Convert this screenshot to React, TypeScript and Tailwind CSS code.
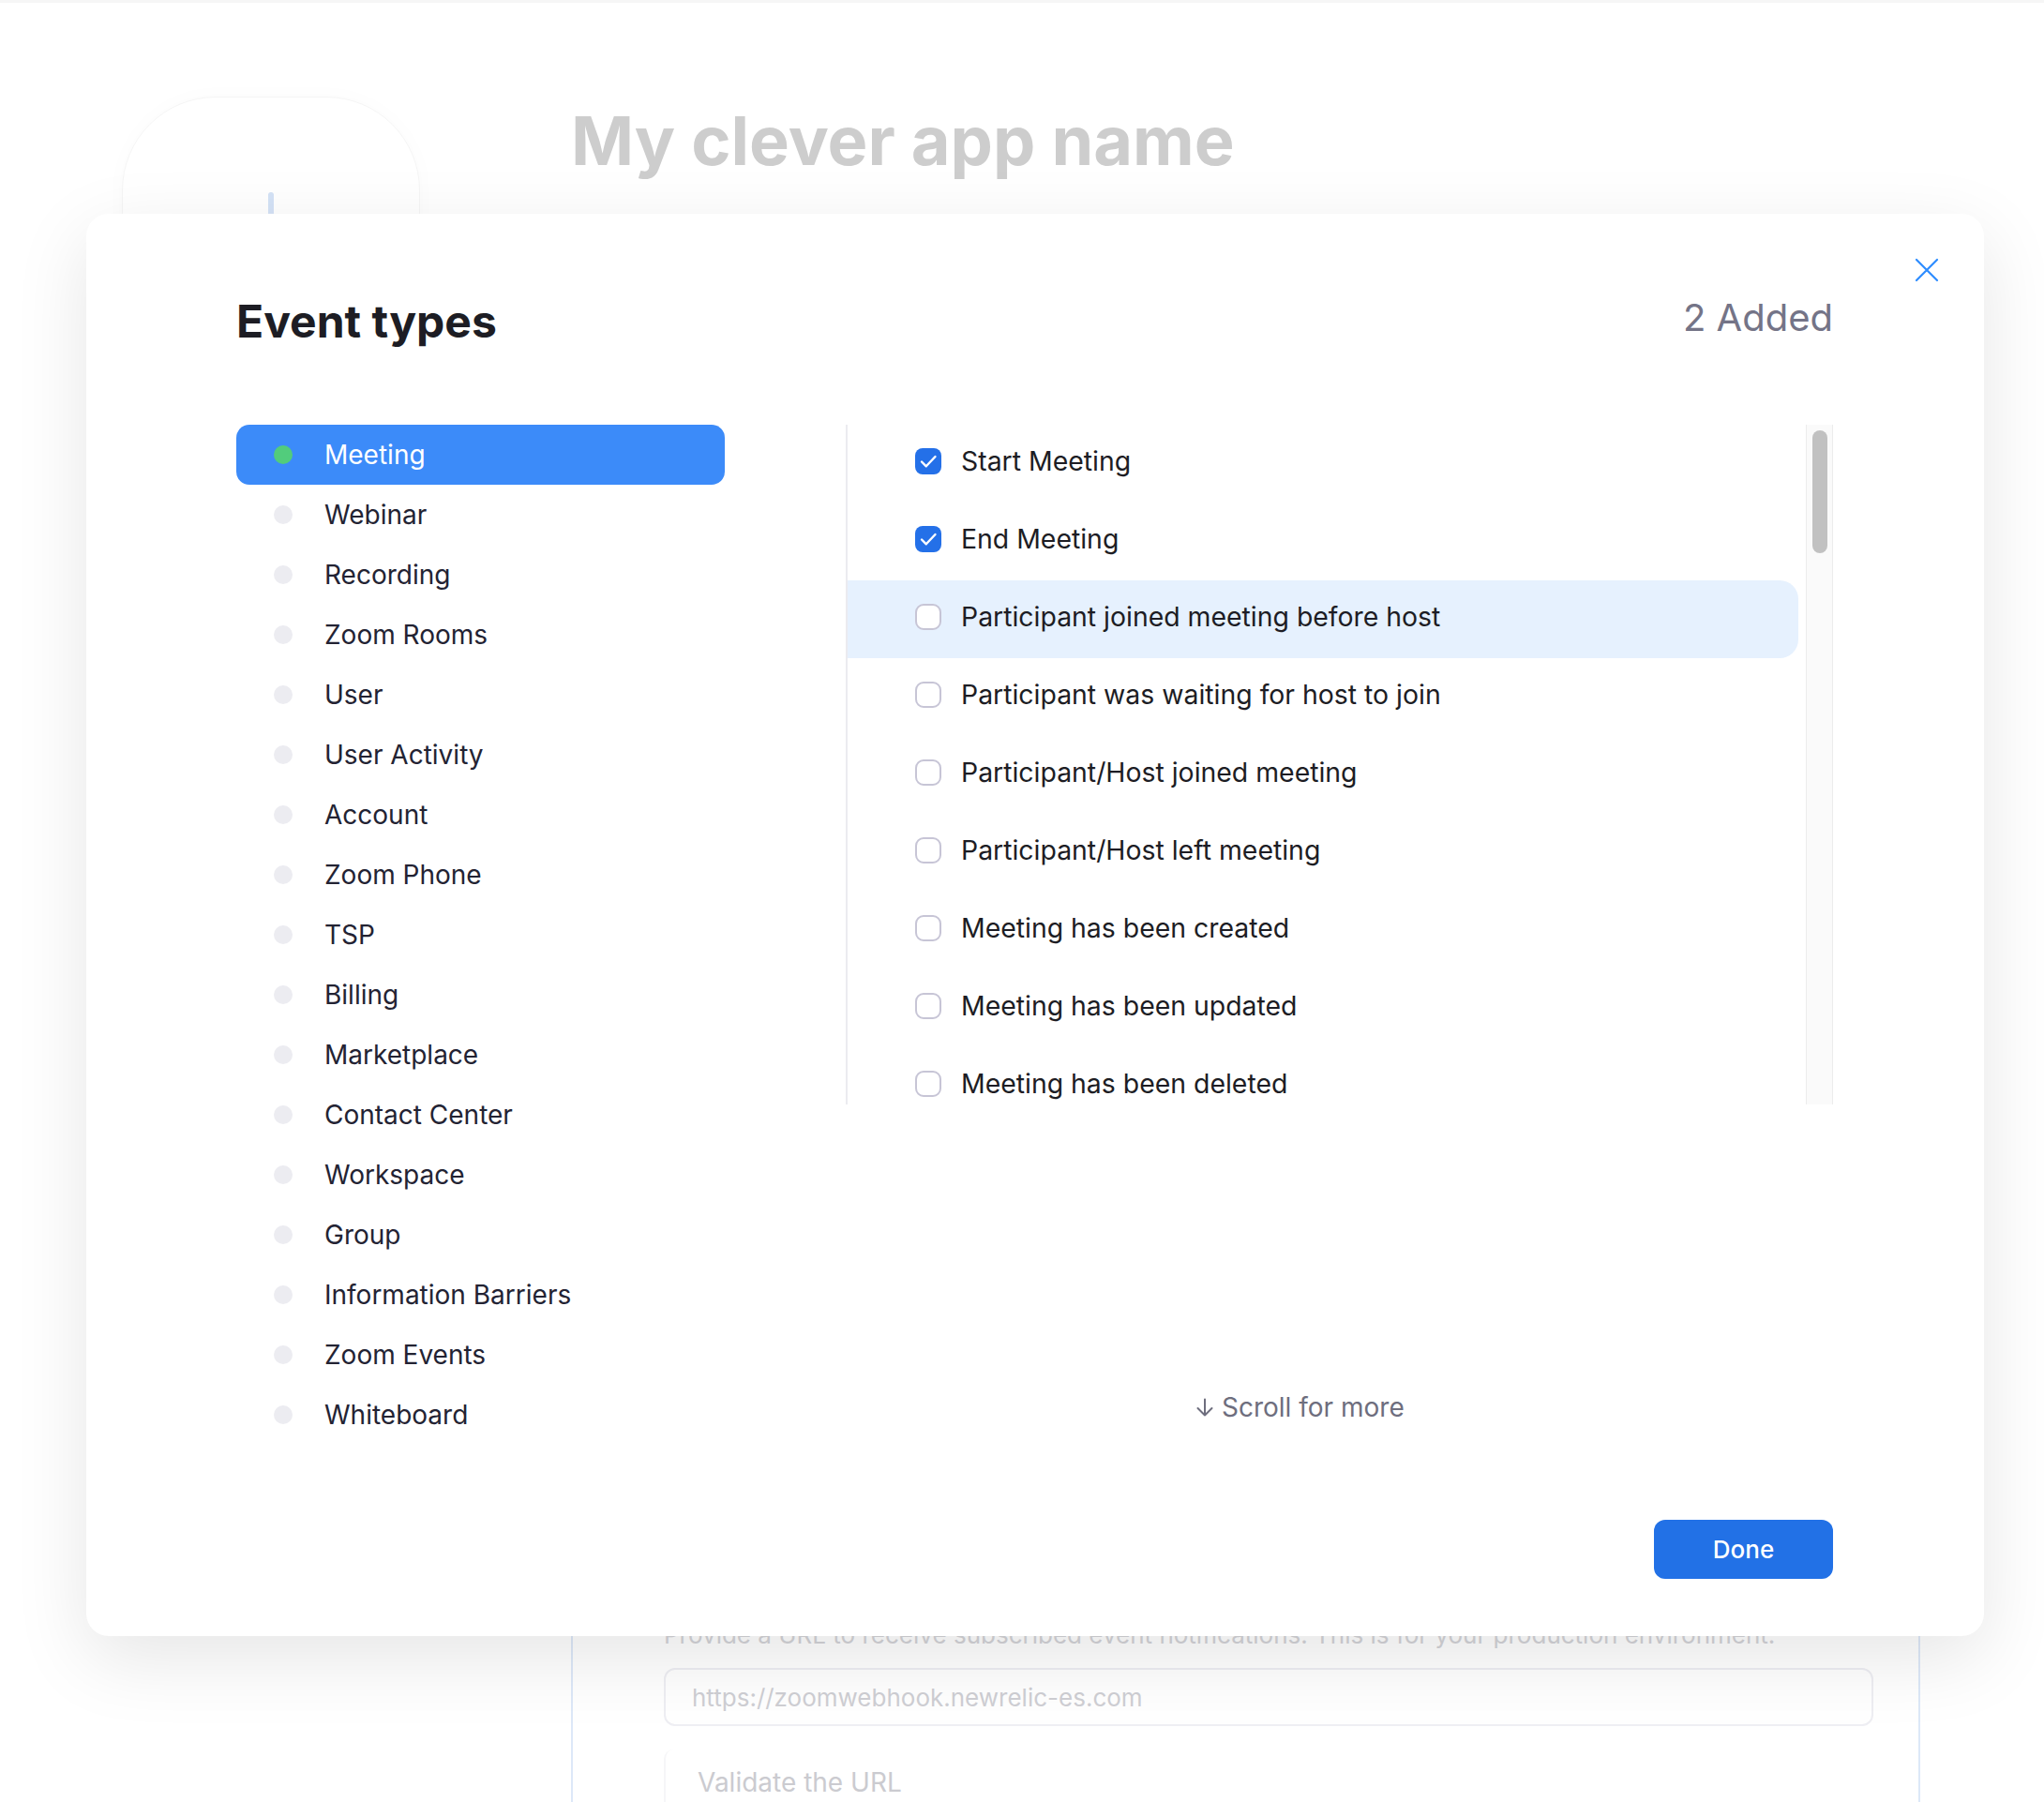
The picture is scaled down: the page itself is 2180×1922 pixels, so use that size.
import React from 'react';

const navItems = [
  'Meeting',
  'Webinar',
  'Recording',
  'Zoom Rooms',
  'User',
  'User Activity',
  'Account',
  'Zoom Phone',
  'TSP',
  'Billing',
  'Marketplace',
  'Contact Center',
  'Workspace',
  'Group',
  'Information Barriers',
  'Zoom Events',
  'Whiteboard',
];

const events = [
  { label: 'Start Meeting', checked: true },
  { label: 'End Meeting', checked: true },
  { label: 'Participant joined meeting before host', checked: false, hover: true },
  { label: 'Participant was waiting for host to join', checked: false },
  { label: 'Participant/Host joined meeting', checked: false },
  { label: 'Participant/Host left meeting', checked: false },
  { label: 'Meeting has been created', checked: false },
  { label: 'Meeting has been updated', checked: false },
  { label: 'Meeting has been deleted', checked: false },
];

const Checkbox: React.FC<{ checked: boolean }> = ({ checked }) =>
  checked ? (
    <span className="flex h-[28px] w-[28px] shrink-0 items-center justify-center rounded-[8px] bg-[#2470e8]">
      <svg width="28" height="28" viewBox="0 0 28 28" fill="none">
        <path d="M7 14.5l4.8 4.8L21.5 9" stroke="white" strokeWidth="2.4" strokeLinecap="round" strokeLinejoin="round" />
      </svg>
    </span>
  ) : (
    <span className="h-[28px] w-[28px] shrink-0 rounded-[9px] border-2 border-[#c7c5d6] bg-white" />
  );

const Background: React.FC = () => (
  <div className="flex h-full flex-col border-t-[3px] border-[#f6f6f6]">
    <div className="flex h-[1700px]">
      <div className="ml-[130px] mt-[100px] flex h-[420px] w-[318px] justify-center rounded-t-[100px] border border-[#f5f5f5] pt-[101px] shadow-[0_0_24px_rgba(0,0,0,0.02)]">
        <div className="h-[40px] w-[6px] rounded-full bg-[#d4e2f6]" />
      </div>
      <h1 className="ml-[161px] mt-[111px] text-[72px] font-bold leading-none text-[#cdcdcd]">
        My clever app name
      </h1>
    </div>
    <div className="ml-[609px] flex w-[1439px] flex-1 flex-col border-x-2 border-[#dde8f8] pl-[97px] pt-[28px]">
      <p className="text-[26px] leading-[36px] text-[#d4d4d8]">
        Provide a URL to receive subscribed event notifications. This is for your production environment.
      </p>
      <div className="mt-[17px] flex h-[62px] w-[1290px] items-center rounded-[12px] border-2 border-[#eeeef3] pl-[28px] text-[26px] text-[#cfcfd4]">
        https://zoomwebhook.newrelic-es.com
      </div>
      <div className="mt-[25px] flex-1 rounded-tl-[10px] border-l-2 border-[#f6f6f8] pl-[34px] pt-[14px] text-[28px] text-[#cbcbd0]">
        Validate the URL
      </div>
    </div>
  </div>
);

const Modal: React.FC = () => (
  <div className="absolute left-[92px] top-[228px] flex h-[1517px] w-[2024px] flex-col rounded-[24px] bg-white shadow-[0_24px_80px_rgba(0,0,0,0.1)]">
    <button className="absolute right-[47px] top-[46px] h-[28px] w-[28px]">
      <svg width="28" height="28" viewBox="0 0 28 28" fill="none">
        <path d="M3 3l22 22M25 3L3 25" stroke="#2d8cff" strokeWidth="2.2" strokeLinecap="round" />
      </svg>
    </button>

    <div className="flex items-center justify-between pl-[160px] pr-[161px] pt-[85px]">
      <h2 className="text-[48px] font-bold leading-[60px] text-[#1d1d24]">Event types</h2>
      <span className="pb-[8px] text-[40px] leading-[50px] text-[#747487]">2 Added</span>
    </div>

    <div className="mt-[80px] flex pl-[160px]">
      <nav className="flex w-[521px] flex-col">
        {navItems.map((item, i) => (
          <div
            key={item}
            className={`flex h-[64px] items-center rounded-[14px] ${i === 0 ? 'bg-[#3c8bf9] text-white' : 'text-[#232333]'}`}
          >
            <span className={`ml-[40px] h-[20px] w-[20px] rounded-full ${i === 0 ? 'bg-[#52cc7c]' : 'bg-[#ececf1]'}`} />
            <span className="ml-[34px] text-[28px]">{item}</span>
          </div>
        ))}
      </nav>

      <div className="ml-[129px] flex flex-col">
        <div className="flex h-[725px] border-l-2 border-[#ebebf0]">
          <div className="h-full w-[1014px] overflow-hidden">
            {events.map((ev) => (
              <div
                key={ev.label}
                className={`flex h-[83px] items-center pb-[5px] pl-[72px] ${ev.hover ? 'rounded-r-[20px] bg-[#e6f1fe]' : ''}`}
              >
                <Checkbox checked={ev.checked} />
                <span className="ml-[21px] text-[28.4px] text-[#1d1d24]">{ev.label}</span>
              </div>
            ))}
          </div>
          <div className="ml-[8px] h-full w-[29px] border-x border-[#ececec] bg-[#fafafa] pt-[6px]">
            <div className="mx-auto h-[131px] w-[16px] rounded-full bg-[#c1c1c1]" />
          </div>
        </div>
        <div className="mt-[305px] flex items-center pl-[374px] text-[28px] leading-[36px] text-[#6e6e7e]">
          <svg width="18" height="20" viewBox="0 0 18 20" fill="none">
            <path d="M9 1.5v17M1.5 11l7.5 7.5L16.5 11" stroke="#6e6e7e" strokeWidth="2" strokeLinecap="round" strokeLinejoin="round" />
          </svg>
          <span className="ml-[9px]">Scroll for more</span>
        </div>
      </div>
    </div>

    <div className="mt-[80px] flex justify-end pr-[161px]">
      <button className="h-[63px] w-[191px] rounded-[12px] bg-[#2271e6] text-[26px] font-medium text-white">
        Done
      </button>
    </div>
  </div>
);

export default function App() {
  return (
    <div className="relative h-[1922px] w-[2180px] overflow-hidden bg-white font-[Inter,'Noto_Sans',sans-serif]">
      <Background />
      <Modal />
    </div>
  );
}
